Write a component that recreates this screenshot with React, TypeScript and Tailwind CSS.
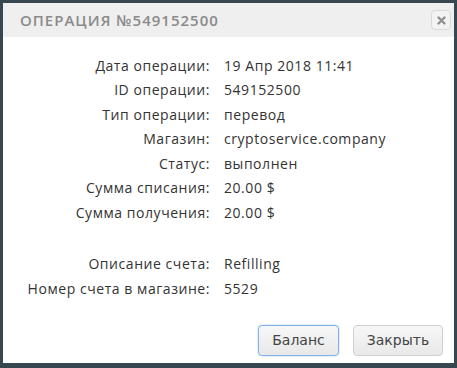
import React from "react";

const rows: [string, string][] = [
  ["Дата операции:", "19 Апр 2018 11:41"],
  ["ID операции:", "549152500"],
  ["Тип операции:", "перевод"],
  ["Магазин:", "cryptoservice.company"],
  ["Статус:", "выполнен"],
  ["Сумма списания:", "20.00 $"],
  ["Сумма получения:", "20.00 $"],
];
const rows2: [string, string][] = [
  ["Описание счета:", "Refilling"],
  ["Номер счета в магазине:", "5529"],
];

function Row({ l, v }: { l: string; v: string }) {
  return (
    <div className="flex h-[24.5px] items-center">
      <div className="w-[207px] text-right">{l}</div>
      <div className="pl-[14px]">{v}</div>
    </div>
  );
}

export default function App() {
  return (
    <div className="w-[457px] h-[368px] bg-[#37474f] p-[3px] pb-[5px] pr-[3px]">
      <div className="w-full h-full bg-white flex flex-col">
        <div className="h-[34px] bg-[#efefef] flex items-center justify-between pl-[17px] pr-[3px]">
          <div
            className="text-[15px] font-semibold tracking-[1px] text-[#8a8a8a]"
            style={{ fontFamily: '"Open Sans", sans-serif' }}
          >
            ОПЕРАЦИЯ №549152500
          </div>
          <div className="w-[20px] h-[20px] border border-[#dadada] rounded-[4px] bg-[#f3f3f3] flex items-center justify-center">
            <svg width="9" height="9" viewBox="0 0 9 9">
              <path d="M1.5 1.5 L7.5 7.5 M7.5 1.5 L1.5 7.5" stroke="#8f8f8f" strokeWidth="2.4" strokeLinecap="round" />
            </svg>
          </div>
        </div>
        <div
          className="flex flex-col pt-[16px] text-[14px] tracking-[0.55px] text-[#333]"
          style={{ fontFamily: '"Open Sans", sans-serif' }}
        >
          {rows.map(([l, v]) => (
            <Row key={l} l={l} v={v} />
          ))}
          <div className="h-[27px]" />
          {rows2.map(([l, v]) => (
            <Row key={l} l={l} v={v} />
          ))}
        </div>
        <div className="flex-1" />
        <div
          className="flex justify-end gap-[14px] pr-[11px] pb-[7px] text-[14px] text-[#444]"
          style={{ fontFamily: '"DejaVu Sans", sans-serif' }}
        >
          <button className="w-[81px] h-[31px] rounded-[4px] border border-[#7fb0ea] bg-gradient-to-b from-[#f7f7f7] to-[#e8e8e8] shadow-[0_0_2px_#a9c9f0]">
            Баланс
          </button>
          <button className="w-[90px] h-[31px] rounded-[4px] border border-[#d0d0d0] bg-gradient-to-b from-[#f7f7f7] to-[#e8e8e8]">
            Закрыть
          </button>
        </div>
      </div>
    </div>
  );
}
